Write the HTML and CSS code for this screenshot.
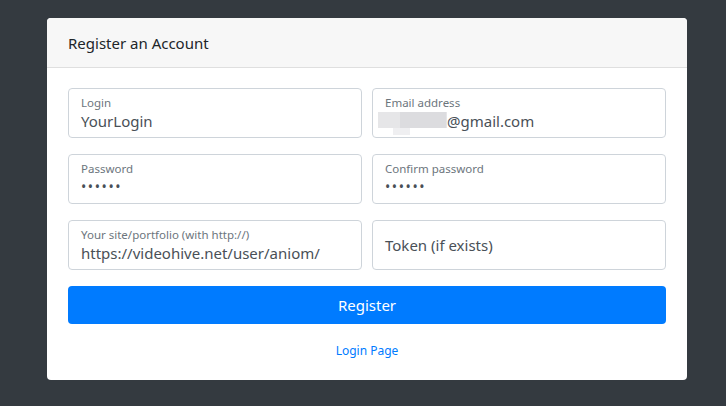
FILE: index.html
```html
<!DOCTYPE html>
<html>
<head>
<meta charset="utf-8">
<link rel="stylesheet" href="styles.css">
</head>
<body>
<div class="card">
  <div class="card-header">Register an Account</div>
  <div class="card-body">
    <div class="grid">
      <div class="field">
        <span class="label">Login</span>
        <span class="value">YourLogin</span>
      </div>
      <div class="field">
        <span class="label">Email address</span>
        <span class="value"><span class="blur"><span class="b1"></span><span class="b2"></span><span class="b3"></span></span>@gmail.com</span>
      </div>
      <div class="field">
        <span class="label">Password</span>
        <span class="value dots">••••••</span>
      </div>
      <div class="field">
        <span class="label">Confirm password</span>
        <span class="value dots">••••••</span>
      </div>
      <div class="field">
        <span class="label">Your site/portfolio (with http://)</span>
        <span class="value">https://videohive.net/user/aniom/</span>
      </div>
      <div class="field single">
        <span class="value">Token (if exists)</span>
      </div>
    </div>
    <button class="btn">Register</button>
    <a class="link" href="#">Login Page</a>
  </div>
</div>
</body>
</html>
```
FILE: styles.css
```css
html, body {
  margin: 0;
  padding: 0;
  background: #343a40;
  height: 100%;
}
body {
  font-family: "Noto Sans", "Open Sans", sans-serif;
  padding: 18px 0 0 47px;
  box-sizing: border-box;
}
.card {
  width: 640px;
  height: 362px;
  background: #fff;
  border-radius: 4px;
  box-sizing: border-box;
  overflow: hidden;
  display: flex;
  flex-direction: column;
}
.card-header {
  height: 50px;
  box-sizing: border-box;
  background: #f7f7f7;
  border-bottom: 1px solid #dfdfdf;
  padding: 0 21px;
  display: flex;
  align-items: center;
  font-size: 15px;
  color: #212529;
}
.card-body {
  padding: 20px 21px 0 21px;
  display: flex;
  flex-direction: column;
}
.grid {
  display: grid;
  grid-template-columns: 294px 294px;
  column-gap: 10px;
  row-gap: 16px;
}
.field {
  height: 50px;
  box-sizing: border-box;
  border: 1px solid #ced4da;
  border-radius: 4px;
  padding: 6px 12px 0 12px;
  display: flex;
  flex-direction: column;
}
.field.single {
  padding-top: 0;
  justify-content: center;
}
.label {
  font-size: 11.5px;
  line-height: 15px;
  color: #6c757d;
}
.value {
  font-size: 15px;
  line-height: 22px;
  color: #495057;
  display: flex;
  align-items: center;
}
.dots {
  font-size: 14px;
  letter-spacing: 1.6px;
  color: #495057;
}
.blur {
  position: relative;
  display: inline-block;
  width: 69px;
  height: 22px;
  margin-left: -7px;
}
.b1 {
  position: absolute;
  left: 0; top: 2px;
  width: 69px; height: 16px;
  background: #e6e6e8;
}
.b2 {
  position: absolute;
  left: 22px; top: 2px;
  width: 46px; height: 16px;
  background: #dcdcdf;
}
.b3 {
  position: absolute;
  left: 15px; top: 18px;
  width: 17px; height: 7px;
  background: #efeff1;
}
.btn {
  margin-top: 16px;
  height: 38px;
  border: none;
  border-radius: 4px;
  background: #007bff;
  color: #fff;
  font-family: inherit;
  font-size: 15px;
  width: 598px;
}
.link {
  margin-top: 18px;
  align-self: center;
  font-size: 12px;
  color: #007bff;
  text-decoration: none;
}
```
